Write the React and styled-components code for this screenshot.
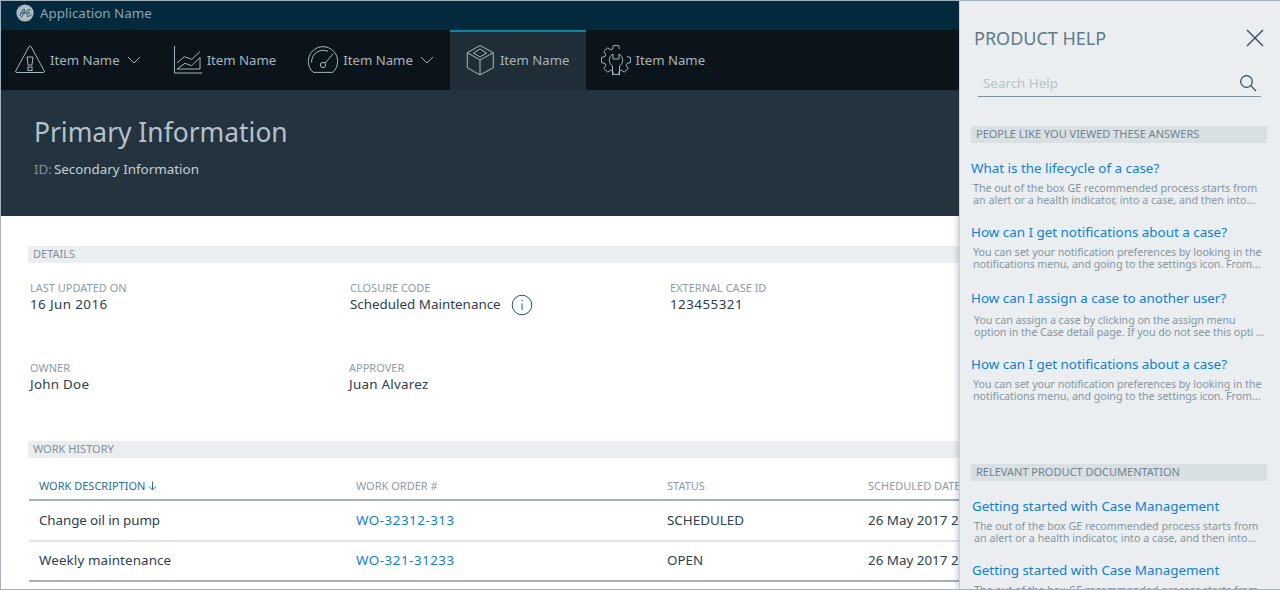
import React from 'react';
import styled, { createGlobalStyle } from 'styled-components';

const GlobalStyle = createGlobalStyle`
html, body {
    margin: 0;
    padding: 0;
    background: #fff;
    overflow: hidden;
}
* {
    box-sizing: border-box;
}
body {
    font-family: "Noto Sans", "Open Sans", sans-serif;
}
`

const Frame = styled.div`
position: relative;
width: 1280px;
height: 590px;
overflow: hidden;
border: 1px solid #a3b2bd;
border-right: 0;
background: #fff;
`

const TopBar = styled.div`
height: 29px;
display: flex;
align-items: center;
gap: 6px;
padding: 0 0 5px 15px;
background: #03293c;
color: #8ea3b0;
font-size: 13.4px;
`

const Nav = styled.nav`
height: 60px;
display: flex;
background: #0c141b;
`

const NavItem = styled.div`
height: 60px;
display: flex;
align-items: center;
padding: 0 ${p => p.$end || 15}px 0 ${p => p.$start || 15}px;
color: #a6b4bd;
font-size: 13.2px;
background: ${p => p.$active ? '#1f2d37' : 'transparent'};
border-top: 2px solid ${p => p.$active ? '#0a86a8' : 'transparent'};
border-bottom: 2px solid transparent;
svg.nav-icon {
    width: 30px;
    height: 30px;
    margin-right: 5px;
    fill: none;
    stroke: #a6b4bd;
    stroke-width: 1;
}
svg.chevron {
    width: 14px;
    height: 8px;
    margin-left: 7px;
    fill: none;
    stroke: #a6b4bd;
    stroke-width: 1;
}
`

const Hero = styled.header`
height: 126px;
padding: 24px 0 0 33px;
background: #24343f;
`

const HeroTitle = styled.h1`
margin: 0;
font-size: 26.4px;
line-height: 36px;
font-weight: 400;
color: #b3c2cc;
`

const HeroSub = styled.div`
margin-top: 9px;
font-size: 13.4px;
line-height: 20px;
color: #c3ced6;
span {
    margin-right: -1.5px;
    color: #7e919e;
}
`

const Content = styled.main`
padding: 30px 0 0 27px;
width: 1240px;
`

const SectionBar = styled.div`
height: 17px;
padding-left: ${p => p.$pad || 5}px;
font-size: 11px;
line-height: 16px;
color: ${p => p.$dark ? '#71838f' : '#7f8f9c'};
background: ${p => p.$dark ? '#d9e0e4' : '#ebeef1'};
text-transform: uppercase;
`

const Fields = styled.div`
display: grid;
grid-template-columns: repeat(3, 320px);
grid-auto-rows: 80px;
padding: 17px 0 0 2px;
height: 178px;
`

const Field = styled.div`
margin-left: ${p => p.$shift || 0}px;
`

const FieldLabel = styled.div`
font-size: 11px;
line-height: 16px;
color: #8c9ca8;
text-transform: uppercase;
`

const FieldValue = styled.div`
display: flex;
align-items: center;
height: 16px;
font-size: 13.4px;
line-height: 16px;
letter-spacing: ${p => p.$track || 0}px;
color: #2c404e;
svg {
    flex: none;
    margin: 2px 0 0 10px;
    width: 22px;
    height: 22px;
}
`

const Row = styled.div`
display: grid;
grid-template-columns: 317px 311px 201px 1fr;
height: ${p => p.$height}px;
margin-left: 1px;
align-items: center;
border-bottom: 2px solid ${p => p.$strong ? '#a3b2bd' : '#dde3e7'};
white-space: nowrap;
`

const HeadCell = styled.div`
display: flex;
align-items: center;
gap: 3px;
padding: 14px 0 0 10px;
font-size: 11px;
color: ${p => p.$sorted ? '#2b6e8f' : '#8c9ca8'};
text-transform: uppercase;
svg {
    width: 9px;
    height: 10px;
    fill: none;
    stroke: #2b6e8f;
    stroke-width: 1;
}
`

const Cell = styled.div`
padding: 0 0 2px 10px;
font-size: 13.4px;
letter-spacing: ${p => p.$track || 0}px;
color: ${p => p.$link ? '#0f7fd0' : '#2c404e'};
`

const Panel = styled.aside`
position: absolute;
top: -1px;
right: 0;
bottom: -1px;
width: 321px;
padding: 0 13px 0 11px;
overflow: hidden;
background: #eaeef1;
border: 1px solid #c8d1d7;
border-right: 0;
box-shadow: -2px 0 5px rgba(30, 50, 65, .22);
`

const PanelHead = styled.div`
display: flex;
justify-content: space-between;
align-items: center;
height: 24px;
margin: 25px 2px 0 3px;
svg {
    width: 20px;
    height: 20px;
    stroke: #33495a;
    stroke-width: 1.2;
    fill: none;
}
`

const PanelTitle = styled.h2`
margin: 0;
font-size: 18px;
font-weight: 400;
color: #607a8b;
text-transform: uppercase;
`

const SearchBox = styled.div`
display: flex;
justify-content: space-between;
align-items: center;
height: 28px;
margin: 19px 6px 29px 7px;
padding: 0 4px 0 5px;
font-size: 13.4px;
color: #b6c3cc;
border-bottom: 1px solid #7f919e;
svg {
    width: 18px;
    height: 18px;
    stroke: #33495a;
    stroke-width: 1.2;
    fill: none;
}
`

const HelpList = styled.div`
padding-top: 15px;
height: ${p => p.$height}px;
`

const HelpItem = styled.div`
margin-left: ${p => p.$shift || 0}px;
height: ${p => p.$tall ? 66 : 64}px;
`

const HelpLink = styled.div`
font-size: 13.4px;
line-height: 20px;
color: #0f7fd0;
white-space: nowrap;
margin-bottom: ${p => p.$gap || 4}px;
`

const HelpLine = styled.div`
padding-left: ${p => p.$indent || 2}px;
font-size: 10.7px;
line-height: 12px;
letter-spacing: ${p => p.$track || 0}px;
color: #8596a3;
white-space: nowrap;
`

const GeLogo = styled.svg`
width: 18px;
height: 18px;
flex: none;
`

const gearPath = () => {
    const pts = [];
    const teeth = 8;
    const step = (Math.PI * 2) / teeth;
    for (let i = 1; i < teeth; i++) {
        const a = Math.PI / 2 - step * i - step;
        [[11.5, 0.3], [14.8, 0.18], [14.8, -0.18], [11.5, -0.3]].forEach(([r, d]) => {
            pts.push([15 + r * Math.cos(a + d), 15 - r * Math.sin(a + d)]);
        });
    }
    return 'M' + pts.map(p => p[0].toFixed(1) + ' ' + p[1].toFixed(1)).join('L');
};

const Chevron = () => (
    <svg className="chevron" viewBox="0 0 14 8"><polyline points="1,1 7,7 13,1" /></svg>
);

const AlertIcon = () => (
    <svg className="nav-icon" viewBox="0 0 30 30">
        <path d="M14 1.6 L.8 25.8 Q.2 27.4 1.6 27.5 H28.4 Q29.8 27.4 29.2 25.8 L16 1.6 Q15 .4 14 1.6 Z" />
        <path d="M12 12 H18 L17 20 H13 Z" />
        <rect x="13" y="22" width="4" height="3.5" />
    </svg>
);

const ChartIcon = () => (
    <svg className="nav-icon" viewBox="0 0 30 30">
        <polyline points="2.5,1 2.5,28 30,28" />
        <polyline points="5,18 12.3,11.7 19.7,14.3 28,6.7" />
        <path d="M5 24 L13 18.3 L19.7 20.7 L28 12.3 V24 Z" />
    </svg>
);

const GaugeIcon = () => (
    <svg className="nav-icon" viewBox="0 0 30 30">
        <path d="M5.3 27.4 A14.7 14.7 0 1 1 24.7 27.4 Z" />
        <path d="M3.6 17.5 A11.5 11.5 0 0 1 20 6.4" />
        <circle cx="15" cy="20" r="2.7" />
        <line x1="17" y1="18" x2="25.5" y2="8.5" />
    </svg>
);

const BoxIcon = () => (
    <svg className="nav-icon" viewBox="0 0 30 30">
        <path d="M15 .5 L28.3 7.7 V22.7 L15 30 L2.3 22.7 V7.7 Z" />
        <path d="M2.3 7.7 L15 15 L28.3 7.7 M15 15 V30" />
        <path d="M15 4 L21.5 8 L15 12 L8.5 8 Z" />
    </svg>
);

const GearIcon = () => (
    <svg className="nav-icon" viewBox="0 0 30 30">
        <path d={gearPath()} />
        <path d="M12 9 A7 7 0 0 0 11.5 21 V30 H18.5 V21 A7 7 0 0 0 18 9 V14 H12 Z" />
    </svg>
);

const SearchIcon = () => (
    <svg viewBox="0 0 18 18"><circle cx="7.5" cy="7.5" r="5.8" /><line x1="11.7" y1="11.7" x2="17" y2="17" /></svg>
);

const CloseIcon = () => (
    <svg viewBox="0 0 20 20"><line x1="2" y1="2" x2="18" y2="18" /><line x1="18" y1="2" x2="2" y2="18" /></svg>
);

const InfoIcon = () => (
    <svg viewBox="0 0 22 22" fill="none" stroke="#1a5a80">
        <circle cx="11" cy="11" r="9.8" />
        <line x1="11" y1="9.5" x2="11" y2="16" />
        <line x1="11" y1="5.8" x2="11" y2="7.4" />
    </svg>
);

const SortArrow = () => (
    <svg viewBox="0 0 9 10"><path d="M4.5 .5 V9 M1 5.5 L4.5 9 L8 5.5" /></svg>
);

const GE_TEXT = ['The out of the box GE recommended process starts from', 'an alert or a health indicator, into a case, and then into...'];
const NOTIFY_TEXT = ['You can set your notification preferences by looking in the', 'notifications menu, and going to the settings icon. From...'];
const ASSIGN_TEXT = ['You can assign a case by clicking on the assign menu', 'option in the Case detail page. If you do not see this opti ...'];

const answers = [
    { title: 'What is the lifecycle of a case?', lines: GE_TEXT },
    { title: 'How can I get notifications about a case?', lines: NOTIFY_TEXT, tall: true, track: -0.04 },
    { title: 'How can I assign a case to another user?', lines: ASSIGN_TEXT, tall: true, gap: 6, indent: 3, track: -0.06 },
    { title: 'How can I get notifications about a case?', lines: NOTIFY_TEXT, track: -0.04 },
];

const docs = [
    { title: 'Getting started with Case Management', lines: GE_TEXT },
    { title: 'Getting started with Case Management', lines: GE_TEXT },
];

const HelpEntry = ({ item, shift }) => (
    <HelpItem $tall={item.tall} $shift={shift}>
        <HelpLink $gap={item.gap}>{item.title}</HelpLink>
        {item.lines.map(line => <HelpLine key={line} $indent={item.indent} $track={item.track}>{line}</HelpLine>)}
    </HelpItem>
);

const App = () => {
    return (
        <Frame>
            <GlobalStyle />
            <TopBar>
                <GeLogo viewBox="0 0 18 18">
                    <circle cx="9" cy="9" r="8.6" fill="#b4c2ca" />
                    <circle cx="9" cy="9" r="7" fill="none" stroke="#8b9ca6" strokeWidth=".6" />
                    <path d="M4 12 C6 6 8.5 3.5 8.5 6 C8.5 9 5.5 14 4.5 13.5 M8 10 C10 8 12.5 4 13.5 6 C14 8 10 9.5 11 12 C12 13 14 12 15 10 M4 9 H14" fill="none" stroke="#46616f" strokeWidth="1.1" />
                </GeLogo>
                Application Name
            </TopBar>
            <Nav>
                <NavItem $start={14}><AlertIcon />Item Name<Chevron /></NavItem>
                <NavItem $start={16} $end={17}><ChartIcon />Item Name</NavItem>
                <NavItem $end={16}><GaugeIcon />Item Name<Chevron /></NavItem>
                <NavItem $active $end={16}><BoxIcon />Item Name</NavItem>
                <NavItem><GearIcon />Item Name</NavItem>
            </Nav>
            <Hero>
                <HeroTitle>Primary Information</HeroTitle>
                <HeroSub><span>ID:</span> Secondary Information</HeroSub>
            </Hero>
            <Content>
                <SectionBar>Details</SectionBar>
                <Fields>
                    <Field>
                        <FieldLabel>Last updated on</FieldLabel>
                        <FieldValue $track={0.4}>16 Jun 2016</FieldValue>
                    </Field>
                    <Field>
                        <FieldLabel>Closure code</FieldLabel>
                        <FieldValue>Scheduled Maintenance <InfoIcon /></FieldValue>
                    </Field>
                    <Field>
                        <FieldLabel>External case ID</FieldLabel>
                        <FieldValue $track={0.45}>123455321</FieldValue>
                    </Field>
                    <Field>
                        <FieldLabel>Owner</FieldLabel>
                        <FieldValue $track={0.25}>John Doe</FieldValue>
                    </Field>
                    <Field $shift={-1}>
                        <FieldLabel>Approver</FieldLabel>
                        <FieldValue $track={0.25}>Juan Alvarez</FieldValue>
                    </Field>
                </Fields>
                <SectionBar>Work history</SectionBar>
                <Row $height={43} $strong>
                    <HeadCell $sorted>Work description <SortArrow /></HeadCell>
                    <HeadCell>Work order #</HeadCell>
                    <HeadCell>Status</HeadCell>
                    <HeadCell>Scheduled date</HeadCell>
                </Row>
                <Row $height={41}>
                    <Cell $track={-0.1}>Change oil in pump</Cell>
                    <Cell $link $track={0.5}>WO-32312-313</Cell>
                    <Cell>SCHEDULED</Cell>
                    <Cell>26 May 2017 2:00 PM</Cell>
                </Row>
                <Row $height={40} $strong>
                    <Cell $track={0.1}>Weekly maintenance</Cell>
                    <Cell $link $track={0.5}>WO-321-31233</Cell>
                    <Cell>OPEN</Cell>
                    <Cell>26 May 2017 2:00 PM</Cell>
                </Row>
            </Content>
            <Panel>
                <PanelHead>
                    <PanelTitle>Product help</PanelTitle>
                    <CloseIcon />
                </PanelHead>
                <SearchBox>Search Help<SearchIcon /></SearchBox>
                <SectionBar $dark>People like you viewed these answers</SectionBar>
                <HelpList $height={321}>
                    {answers.map((item, i) => <HelpEntry key={i} item={item} />)}
                </HelpList>
                <SectionBar $dark>Relevant product documentation</SectionBar>
                <HelpList $height={140}>
                    {docs.map((item, i) => <HelpEntry key={i} item={item} shift={1} />)}
                </HelpList>
            </Panel>
        </Frame>
    );
}
export default App;
